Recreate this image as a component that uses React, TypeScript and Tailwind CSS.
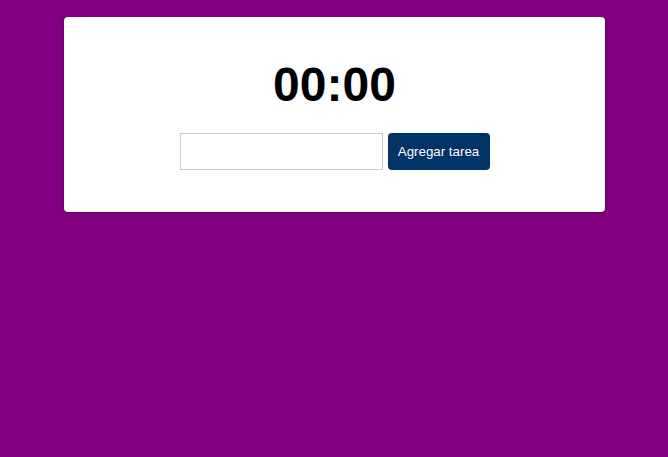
export default function App() {
  return (
    <div className="min-h-[457px] bg-[#800080] pt-[17px] font-['Liberation_Sans',Arial,sans-serif]">
      <div className="ml-[64px] w-[541px] h-[195px] rounded bg-white shadow-[0_1px_3px_rgba(0,0,0,0.3)] flex flex-col items-center pt-[40px]">
        <h1 className="text-[48px] leading-[56px] font-bold text-black">00:00</h1>
        <div className="mt-[20px] flex items-center gap-[5px]">
          <input
            type="text"
            className="w-[203px] h-[37px] border border-[#cccccc] bg-white px-2 text-sm outline-none"
          />
          <button className="h-[37px] w-[102px] rounded bg-[#003366] text-[13.33px] text-white">
            Agregar tarea
          </button>
        </div>
      </div>
    </div>
  )
}
